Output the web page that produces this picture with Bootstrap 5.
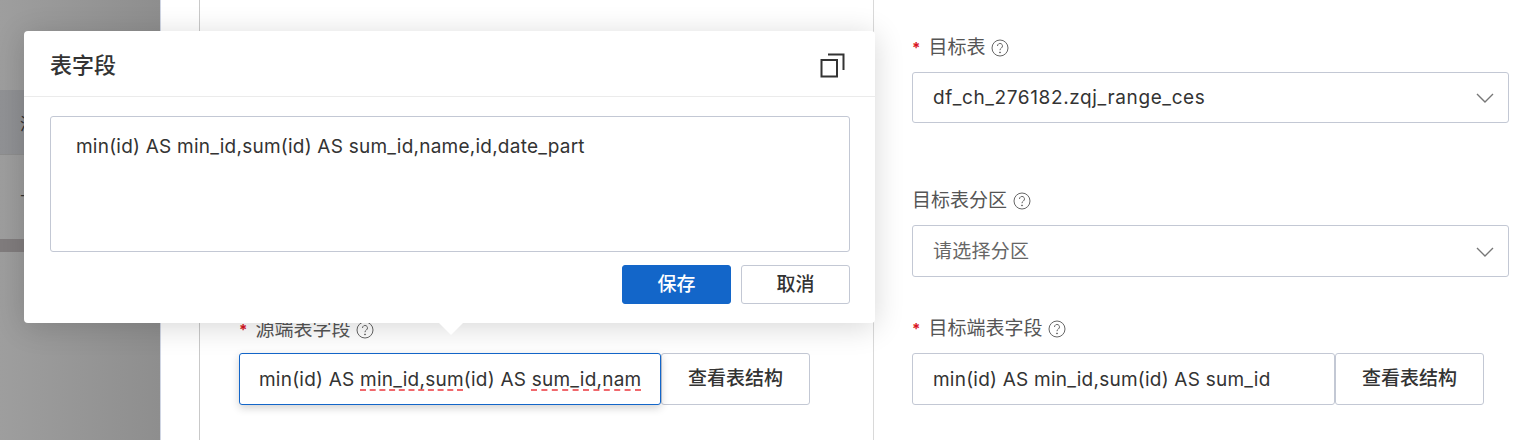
<!DOCTYPE html>
<html lang="zh-CN">
<head>
<meta charset="utf-8">
<title>表字段</title>
<link href="https://cdn.jsdelivr.net/npm/bootstrap@5.3.0/dist/css/bootstrap.min.css" rel="stylesheet">
<style>
html,body{height:440px;overflow:hidden;background:#fff}
body{font-family:Inter,"Noto Sans CJK SC",sans-serif;font-size:17px;color:#333;position:relative}
.shell{height:440px}
.side-pane{width:161px;background:linear-gradient(90deg,#9e9e9e,#8e8e8e);border-right:1px solid #cfd5e3;flex:none;color:#333;overflow:hidden}
.side-top{height:90px}
.side-row-a{height:65px;background:rgba(120,122,132,.35);padding:22px 0 0 20px;border-bottom:1px solid #8d8d8d;line-height:24px}
.side-row-b{height:84px;padding:30px 0 0 20px;line-height:24px}
.side-band{height:13px;background:#807c7d}
.gutter{width:38px;flex:none}
.left-pane{width:675px;flex:none;border-left:1px solid #c9c9c9;border-right:1px solid #d9d9d9;padding:318px 0 0 39px}
.right-pane{flex:1;padding:36px 7px 0 38px;min-width:0}
.f-label{height:24px;line-height:24px;margin-bottom:12px;color:#555;font-size:19px;gap:6px}
.left-pane .f-label{margin-bottom:11px}
.star{color:#d9141e;font-size:15px;margin-right:2px;font-weight:700}
.q-icon{width:18px;height:18px;flex:none}
.f-box{height:52px;border:1px solid #c3c8d4;border-radius:3px;padding:1px 20px 0;background:#fff;color:#333;line-height:50px;font-size:19px;letter-spacing:.23px;white-space:nowrap;overflow:hidden}
.f-select{width:597px;padding-right:13px}
.f-select-a{height:51px;margin-bottom:66px;margin-top:1px}
.f-select-b{margin-bottom:40px}
.placeholder-txt{color:#666}
.wide-val{letter-spacing:.62px}
.f-wide-l{width:422px;border-color:#1366c9;box-shadow:0 3px 8px rgba(0,0,0,.18);position:relative;z-index:1;padding:1px 19px 0}
.f-wide-r{width:423px}
.struct-btn{height:52px;width:149px;border:1px solid #c3c8d4;border-radius:3px;background:#fff;color:#333;font-size:19px;font-weight:500;padding:0}
.spell{text-decoration:underline dashed #f0686c 2px;text-underline-offset:3px}
.chev{width:20px;height:12px;flex:none}
.pop-panel{position:absolute;left:24px;top:31px;width:851px;height:292px;background:#fff;border-radius:4px;box-shadow:0 4px 30px rgba(0,0,0,.16);z-index:5}
.pop-head{height:66px;border-bottom:1px solid #ebebeb;padding:3px 29px 0 26px}
.pop-title{font-size:22px;font-weight:500;color:#333;margin:0;line-height:1}
.pop-area{margin:19px 25px 0 26px;height:136px;border:1px solid #c3c8d4;border-radius:3px;padding:17px 25px;font-size:19px;letter-spacing:.23px;line-height:26px;color:#333}
.pop-foot{margin:13px 25px 0 0;gap:10px}
.pop-btn{width:109px;height:39px;padding:0;font-size:19px;font-weight:500;border-radius:3px;line-height:1}
.btn-save{background:#1366c9;border:1px solid #1366c9;color:#fff}
.btn-cancel{background:#fff;border:1px solid #c3c8d4;color:#333}
.pop-arrow{position:absolute;left:415px;top:100%;width:0;height:0;border-left:12px solid transparent;border-right:12px solid transparent;border-top:12px solid #fff}
</style>
</head>
<body>
<div class="shell d-flex">
  <div class="side-pane">
    <div class="side-top"></div>
    <div class="side-row-a">满</div>
    <div class="side-row-b">十</div>
    <div class="side-band"></div>
  </div>
  <div class="gutter"></div>
  <div class="left-pane">
    <div class="f-label d-flex align-items-center"><span class="star">*</span><span>源端表字段</span>
      <svg class="q-icon" viewBox="0 0 18 18" fill="none" stroke="#666" stroke-width="1"><circle cx="9" cy="9" r="8"/><path d="M6.500 7a2.500 2.500 0 1 1 3.900 2c-.9.600-1.400 1.100-1.400 2.200"/><circle cx="9" cy="13.400" r=".5" fill="#666"/></svg></div>
    <div class="d-flex">
      <div class="f-box f-wide-l">min(id) AS <span class="spell">min_id,sum</span>(id) AS <span class="spell">sum_id,nam</span></div>
      <button type="button" class="btn struct-btn">查看表结构</button>
    </div>
  </div>
  <div class="right-pane">
    <div class="f-label d-flex align-items-center"><span class="star">*</span><span>目标表</span>
      <svg class="q-icon" viewBox="0 0 18 18" fill="none" stroke="#666" stroke-width="1"><circle cx="9" cy="9" r="8"/><path d="M6.500 7a2.500 2.500 0 1 1 3.900 2c-.9.600-1.400 1.100-1.400 2.200"/><circle cx="9" cy="13.400" r=".5" fill="#666"/></svg></div>
    <div class="f-box f-select f-select-a d-flex align-items-center justify-content-between"><span class="wide-val">df_ch_276182.zqj_range_ces</span>
      <svg class="chev" viewBox="0 0 20 12" fill="none" stroke="#777" stroke-width="1.4"><path d="M2 2l8 8 8-8"/></svg></div>
    <div class="f-label d-flex align-items-center"><span>目标表分区</span>
      <svg class="q-icon" viewBox="0 0 18 18" fill="none" stroke="#666" stroke-width="1"><circle cx="9" cy="9" r="8"/><path d="M6.500 7a2.500 2.500 0 1 1 3.900 2c-.9.600-1.400 1.100-1.400 2.200"/><circle cx="9" cy="13.400" r=".5" fill="#666"/></svg></div>
    <div class="f-box f-select f-select-b d-flex align-items-center justify-content-between"><span class="placeholder-txt">请选择分区</span>
      <svg class="chev" viewBox="0 0 20 12" fill="none" stroke="#777" stroke-width="1.4"><path d="M2 2l8 8 8-8"/></svg></div>
    <div class="f-label d-flex align-items-center"><span class="star">*</span><span>目标端表字段</span>
      <svg class="q-icon" viewBox="0 0 18 18" fill="none" stroke="#666" stroke-width="1"><circle cx="9" cy="9" r="8"/><path d="M6.500 7a2.500 2.500 0 1 1 3.900 2c-.9.600-1.400 1.100-1.400 2.200"/><circle cx="9" cy="13.400" r=".5" fill="#666"/></svg></div>
    <div class="d-flex">
      <div class="f-box f-wide-r">min(id) AS min_id,sum(id) AS sum_id</div>
      <button type="button" class="btn struct-btn">查看表结构</button>
    </div>
  </div>
</div>
<div class="pop-panel">
  <div class="pop-head d-flex align-items-center justify-content-between">
    <h5 class="pop-title">表字段</h5>
    <svg width="26" height="25" viewBox="0 0 26 25" fill="none" stroke="#333" stroke-width="2"><path d="M8 1.500h15.500v15.500"/><rect x="1.500" y="7" width="15.500" height="16.500" /></svg>
  </div>
  <div class="pop-area">min(id) AS min_id,sum(id) AS sum_id,name,id,date_part</div>
  <div class="pop-foot d-flex justify-content-end">
    <button type="button" class="btn pop-btn btn-save">保存</button>
    <button type="button" class="btn pop-btn btn-cancel">取消</button>
  </div>
  <div class="pop-arrow"></div>
</div>
<script src="https://cdn.jsdelivr.net/npm/bootstrap@5.3.0/dist/js/bootstrap.bundle.min.js"></script>
</body>
</html>
